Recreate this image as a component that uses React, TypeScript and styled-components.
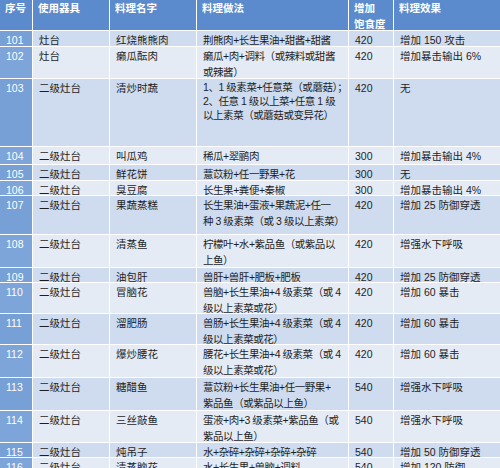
import React from "react";
import styled, { createGlobalStyle } from "styled-components";

const Global = createGlobalStyle`
  html, body { margin: 0; padding: 0; background: #ffffff; }
  body { font-family: "Liberation Sans", "Noto Sans CJK SC", sans-serif; }
`;

const Sheet = styled.div`
  width: 500px;
  height: 468px;
  overflow: hidden;
  background: #ffffff;
  font-family: "Liberation Sans", "Noto Sans CJK SC", sans-serif;
  font-size: 10.5px;
`;

const Row = styled.div<{ $h: number }>`
  display: grid;
  grid-template-columns: 33px 77px 87px 152px 45px 1fr;
  height: ${(p) => p.$h}px;
  border-bottom: 1px solid #ffffff;
  box-sizing: border-box;
  flex-shrink: 0;
`;

const HeadCell = styled.div`
  background: #5b8bcc;
  color: #ffffff;
  font-weight: 600;
  line-height: 16px;
  padding: 0 0 0 5px;
  border-right: 1px solid #ffffff;
  white-space: nowrap;
  overflow: hidden;
  &:last-child { border-right: none; }
`;

const NumCell = styled.div<{ $odd: boolean }>`
  background: ${(p) => (p.$odd ? "#77a0d7" : "#7ea5d9")};
  color: #ffffff;
  line-height: 16px;
  padding: 1px 0 0 6px;
  border-right: 1px solid #ffffff;
  white-space: nowrap;
  overflow: hidden;
`;

const Cell = styled.div<{ $odd: boolean; $lh: number; $tight?: boolean }>`
  background: ${(p) => (p.$odd ? "#cfdcef" : "#e5ebf5")};
  color: #1e1e1e;
  line-height: ${(p) => p.$lh}px;
  letter-spacing: ${(p) => (p.$tight ? "-0.45px" : "0")};
  padding: 1px 0 0 6px;
  border-right: 1px solid #ffffff;
  white-space: nowrap;
  overflow: hidden;
  &:last-child { border-right: none; }
`;

type Item = {
  no: string;
  tool: string;
  name: string;
  recipe: string[];
  food: string;
  effect: string;
  h: number;
  lh?: number;
};

const rows: Item[] = [
  { no: "101", tool: "灶台", name: "红烧熊熊肉", recipe: ["荆熊肉+长生果油+甜酱+甜酱"], food: "420", effect: "增加 150 攻击", h: 16 },
  { no: "102", tool: "灶台", name: "癞瓜酝肉", recipe: ["癞瓜+肉+调料（或辣料或甜酱", "或辣酱）"], food: "420", effect: "增加暴击输出 6%", h: 32 },
  { no: "103", tool: "二级灶台", name: "清炒时蔬", recipe: ["1、1 级素菜+任意菜（或蘑菇）；", "2、任意 1 级以上菜+任意 1 级", "以上素菜（或蘑菇或变异花）"], food: "420", effect: "无", h: 68, lh: 14 },
  { no: "104", tool: "二级灶台", name: "叫瓜鸡", recipe: ["稀瓜+翠鹂肉"], food: "300", effect: "增加暴击输出 4%", h: 18 },
  { no: "105", tool: "二级灶台", name: "鲜花饼", recipe: ["薏苡粉+任一野果+花"], food: "300", effect: "无", h: 16 },
  { no: "106", tool: "二级灶台", name: "臭豆腐", recipe: ["长生果+粪便+秦椒"], food: "300", effect: "增加暴击输出 4%", h: 15 },
  { no: "107", tool: "二级灶台", name: "果蔬蒸糕", recipe: ["长生果油+蛋液+果蔬泥+任一", "种 3 级素菜（或 3 级以上素菜）"], food: "420", effect: "增加 25 防御穿透", h: 39 },
  { no: "108", tool: "二级灶台", name: "清蒸鱼", recipe: ["柠檬叶+水+紫品鱼（或紫品以", "上鱼）"], food: "420", effect: "增强水下呼吸", h: 33 },
  { no: "109", tool: "二级灶台", name: "油包肝", recipe: ["兽肝+兽肝+肥板+肥板"], food: "420", effect: "增加 25 防御穿透", h: 15 },
  { no: "110", tool: "二级灶台", name: "冒脑花", recipe: ["兽脑+长生果油+4 级素菜（或 4", "级以上素菜或花）"], food: "420", effect: "增加 60 暴击", h: 31 },
  { no: "111", tool: "二级灶台", name: "溜肥肠", recipe: ["兽肠+长生果油+4 级素菜（或 4", "级以上素菜或花）"], food: "420", effect: "增加 60 暴击", h: 31 },
  { no: "112", tool: "二级灶台", name: "爆炒腰花", recipe: ["腰花+长生果油+4 级素菜（或 4", "级以上素菜或花）"], food: "420", effect: "增加 60 暴击", h: 33 },
  { no: "113", tool: "二级灶台", name: "糖醋鱼", recipe: ["薏苡粉+长生果油+任一野果+", "紫品鱼（或紫品以上鱼）"], food: "540", effect: "增强水下呼吸", h: 33 },
  { no: "114", tool: "二级灶台", name: "三丝敲鱼", recipe: ["蛋液+肉+3 级素菜+紫品鱼（或", "紫品以上鱼）"], food: "540", effect: "增强水下呼吸", h: 32 },
  { no: "115", tool: "二级灶台", name: "炖吊子", recipe: ["水+杂碎+杂碎+杂碎+杂碎"], food: "540", effect: "增加 50 防御穿透", h: 15 },
  { no: "116", tool: "二级灶台", name: "清蒸脑花", recipe: ["水+长生果+兽脑+调料"], food: "540", effect: "增加 120 防御", h: 32 },
];

const Lines: React.FC<{ lines: string[] }> = ({ lines }) => (
  <>
    {lines.map((l, i) => (
      <React.Fragment key={i}>
        {i > 0 && <br />}
        {l}
      </React.Fragment>
    ))}
  </>
);

export default function App() {
  return (
    <Sheet>
      <Global />
      <Row $h={31}>
        <HeadCell>序号</HeadCell>
        <HeadCell>使用器具</HeadCell>
        <HeadCell>料理名字</HeadCell>
        <HeadCell>料理做法</HeadCell>
        <HeadCell>
          增加
          <br />
          饱食度
        </HeadCell>
        <HeadCell>料理效果</HeadCell>
      </Row>
      {rows.map((r, i) => {
        const odd = i % 2 === 0;
        const lh = r.lh ?? 16;
        return (
          <Row key={r.no} $h={r.h}>
            <NumCell $odd={odd}>{r.no}</NumCell>
            <Cell $odd={odd} $lh={16}>{r.tool}</Cell>
            <Cell $odd={odd} $lh={16}>{r.name}</Cell>
            <Cell $odd={odd} $lh={lh} $tight>
              <Lines lines={r.recipe} />
            </Cell>
            <Cell $odd={odd} $lh={16}>{r.food}</Cell>
            <Cell $odd={odd} $lh={16}>{r.effect}</Cell>
          </Row>
        );
      })}
    </Sheet>
  );
}
